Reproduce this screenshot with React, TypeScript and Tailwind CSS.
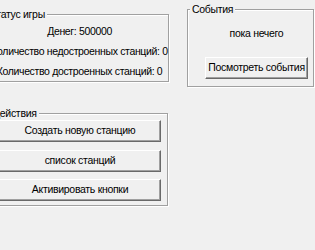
import type { ReactNode } from 'react'

const font = { fontFamily: '"Liberation Sans", Arial, sans-serif' }

function GroupBox({ title, className, titleClass = 'left-[2px]', children }: { title: string; className: string; titleClass?: string; children: ReactNode }) {
	return (
		<div className={`relative border border-[#a0a0a0] shadow-[1px_1px_0_#ffffff,inset_1px_1px_0_#ffffff] ${className}`}>
			<span className={`absolute top-[-8px] whitespace-nowrap bg-[#f0f0f0] px-[2px] text-[10.5px] leading-[14px] tracking-[-0.3px] text-black ${titleClass}`}>
				{title}
			</span>
			{children}
		</div>
	)
}

function Button({ label, className = '' }: { label: string; className?: string }) {
	return (
		<button
			className={`flex h-[22px] items-center justify-center whitespace-nowrap border border-t-white border-l-white border-r-[#696969] border-b-[#696969] bg-[#f0f0f0] text-[10.5px] tracking-[-0.3px] text-black shadow-[inset_-1px_-1px_0_#a0a0a0] ${className}`}
		>
			{label}
		</button>
	)
}

export default function App() {
	return (
		<div className="h-[250px] w-[315px] overflow-hidden bg-[#f0f0f0]" style={font}>
			<div className="flex items-start">
				{/* левая колонка */}
				<div className="ml-[-10px] flex w-[179px] shrink-0 flex-col">
					<GroupBox title="Статус игры" className="mt-[14px] h-[68px]" titleClass="left-[-4px]">
						<div className="flex flex-col items-center pt-[6px] text-[10.5px] leading-[20px] tracking-[-0.35px] text-black">
							<div>Денег: 500000</div>
							<div className="whitespace-nowrap">Количество недостроенных станций: 0</div>
							<div className="whitespace-nowrap">Количество достроенных станций: 0</div>
						</div>
					</GroupBox>

					<GroupBox title="Действия" className="ml-[1px] mt-[31px] h-[93px] w-[177px]" titleClass="left-[-1px]">
						<div className="flex flex-col gap-[7px] pl-[7px] pr-[6px] pt-[6px]">
							<Button label="Создать новую станцию" />
							<Button label="список станций" className="mt-[1px]" />
							<Button label="Активировать кнопки" />
						</div>
					</GroupBox>
				</div>

				{/* события */}
				<GroupBox title="События" className="ml-[18px] mt-[9px] h-[78px] w-[127px] shrink-0">
					<div className="flex flex-col items-center pl-[12px] pt-[13px]">
						<div className="text-[10.5px] leading-[20px] tracking-[-0.3px] text-black">пока нечего</div>
						<Button label="Посмотреть события" className="mt-[14px] w-[103px]" />
					</div>
				</GroupBox>
			</div>
		</div>
	)
}
